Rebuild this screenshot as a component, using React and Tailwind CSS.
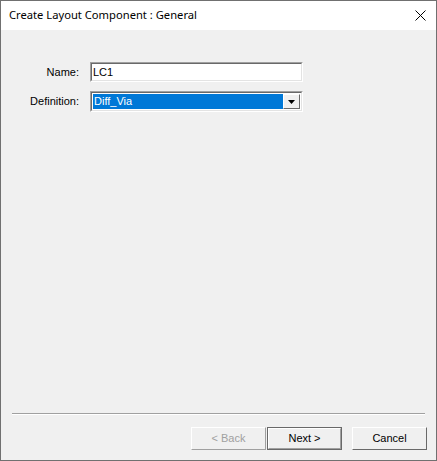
export default function App() {
  const ui = { fontFamily: '"Liberation Sans", Arial, sans-serif' };
  return (
    <div className="w-[437px] h-[461px] flex flex-col border border-[#707070] bg-[#f0f0f0] overflow-hidden" style={ui}>
      {/* title bar */}
      <div className="h-[29px] bg-white flex items-center justify-between pl-[8px] pr-[9px] shrink-0">
        <span className="text-[11.2px] text-black" style={{ fontFamily: '"Noto Sans", "Open Sans", sans-serif' }}>
          Create Layout Component : General
        </span>
        <svg width="11" height="11" viewBox="0 0 11 11" className="mr-[1px]">
          <path d="M0.5 0.5 L10.5 10.5 M10.5 0.5 L0.5 10.5" stroke="#000" strokeWidth="1" />
        </svg>
      </div>

      {/* body */}
      <div className="flex-1 flex flex-col">
        <div className="mt-[32px] grid grid-cols-[78px_213px] gap-x-[11px] gap-y-[9px] items-center text-[11px] text-black">
          <div className="text-right">Name:</div>
          <div className="h-[20px] border border-t-[#a0a0a0] border-l-[#a0a0a0] border-r-white border-b-white">
            <div className="h-full border border-t-[#696969] border-l-[#696969] border-r-[#e3e3e3] border-b-[#e3e3e3] bg-white flex items-center pl-[1px]">
              LC1
            </div>
          </div>

          <div className="text-right">Definition:</div>
          <div className="h-[21px] border border-t-[#a0a0a0] border-l-[#a0a0a0] border-r-white border-b-white">
            <div className="h-full border border-t-[#696969] border-l-[#696969] border-r-[#e3e3e3] border-b-[#e3e3e3] bg-white flex p-[1px]">
              <div className="flex-1 bg-[#0078d7] text-white flex items-center pl-[1px]">Diff_Via</div>
              <div className="w-[17px] h-full border border-t-white border-l-white border-r-[#696969] border-b-[#696969] bg-[#f0f0f0] flex items-center justify-center">
                <svg width="7" height="4" viewBox="0 0 7 4">
                  <path d="M0 0 H7 L3.5 4 Z" fill="#000" />
                </svg>
              </div>
            </div>
          </div>
        </div>

        {/* footer */}
        <div className="mt-auto">
          <div className="mx-[11px] border-t border-t-[#a0a0a0] border-b border-b-white" />
          <div className="flex justify-end mt-[12px] mb-[10px] pr-[9px] text-[11px]">
            <button className="w-[75px] h-[23px] bg-[#f0f0f0] border border-t-white border-l-white border-r-[#a0a0a0] border-b-[#a0a0a0] text-[#a0a0a0]">
              &lt; Back
            </button>
            <button className="ml-[1px] w-[75px] h-[23px] border border-[#696969] bg-[#f0f0f0] flex">
              <span className="flex-1 border border-t-white border-l-white border-r-[#a0a0a0] border-b-[#a0a0a0] flex items-center justify-center text-black">
                Next &gt;
              </span>
            </button>
            <button className="ml-[10px] w-[75px] h-[23px] bg-[#f0f0f0] border border-t-white border-l-white border-r-[#696969] border-b-[#696969] text-black">
              Cancel
            </button>
          </div>
        </div>
      </div>
    </div>
  );
}
